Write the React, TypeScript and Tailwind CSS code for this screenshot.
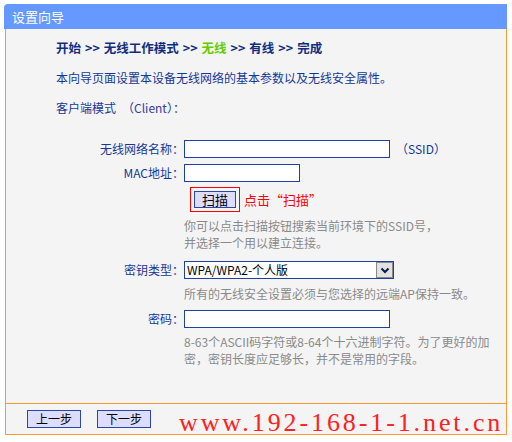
import React from "react";

const cjk = { fontFamily: '"Noto Sans CJK SC", "Noto Sans", sans-serif' };

function Label({ children }: { children: React.ReactNode }) {
  return <div className="w-[128px] text-right text-[12px] leading-[18px] text-[#15389a]">{children}</div>;
}

function Hint({ children }: { children: React.ReactNode }) {
  return <div className="ml-[128px] text-[12px] leading-[17px] text-[#8a8a8a]">{children}</div>;
}

export default function App() {
  return (
    <div className="relative w-[512px] h-[442px] bg-white overflow-hidden" style={cjk}>
      {/* title bar */}
      <div className="mt-[4px] ml-[4px] w-[503px] h-[25px] bg-[#6699ff] rounded-tl-[4px] flex items-center pl-[8px] text-[13px] text-white">
        设置向导
      </div>

      <div className="ml-[5px] w-[502px] bg-[#f4f4f4] border-x border-b border-[#ff9933]">
        <div className="h-[374px] pl-[50px] pt-[9px]">
          {/* steps */}
          <div className="h-[20px] leading-[20px] text-[12.5px] font-bold text-[#112f80] flex gap-[4px]">
            <span>开始</span>
            <span>&gt;&gt;</span>
            <span>无线工作模式</span>
            <span>&gt;&gt;</span>
            <span className="text-[#66cc00]">无线</span>
            <span>&gt;&gt;</span>
            <span>有线</span>
            <span>&gt;&gt;</span>
            <span>完成</span>
          </div>
          <div className="mt-[10px] h-[20px] leading-[20px] text-[12px] text-[#15389a]">
            本向导页面设置本设备无线网络的基本参数以及无线安全属性。
          </div>
          <div className="mt-[10px] h-[20px] leading-[20px] text-[12px] text-[#15389a]">
            客户端模式　（<span className="text-[#3a3aa8]">Client</span>）：
          </div>

          {/* form */}
          <div className="mt-[22px] flex items-center">
            <Label>无线网络名称：</Label>
            <div className="w-[206px] h-[18px] bg-white border border-[#1e3fa5]" />
            <span className="ml-[6px] text-[12px] text-[#15389a]">（SSID）</span>
          </div>
          <div className="mt-[6px] flex items-center">
            <Label>MAC地址：</Label>
            <div className="w-[116px] h-[18px] bg-white border border-[#1e3fa5]" />
          </div>
          <div className="mt-[5px] flex items-center">
            <div className="w-[128px]" />
            <div className="ml-[6px] p-[3px] border border-[#ff0000]">
              <div className="w-[42px] h-[17px] bg-[#ddddff] border border-[#2a46a8] flex items-center justify-center text-[13px] leading-none text-black">
                扫描
              </div>
            </div>
            <span className="ml-[4px] text-[13px] text-[#ff0000]">点击“扫描”</span>
          </div>
          <div className="mt-[5px]">
            <Hint>
              你可以点击扫描按钮搜索当前环境下的SSID号，
              <br />
              并选择一个用以建立连接。
            </Hint>
          </div>
          <div className="mt-[10px] flex items-center">
            <Label>密钥类型：</Label>
            <div className="w-[210px] h-[18px] bg-white border border-[#1e3fa5] flex items-center justify-between">
              <span className="pl-[2px] text-[12px] text-black leading-none">WPA/WPA2-个人版</span>
              <div className="w-[17px] h-[16px] bg-[#e2e2e2] border border-[#888] flex items-center justify-center">
                <svg width="10" height="7" viewBox="0 0 10 7">
                  <path d="M1.5 1.5 L5 5 L8.5 1.5" fill="none" stroke="#0a1a4a" strokeWidth="2" />
                </svg>
              </div>
            </div>
          </div>
          <div className="mt-[6px]">
            <Hint>所有的无线安全设置必须与您选择的远端AP保持一致。</Hint>
          </div>
          <div className="mt-[8px] flex items-center">
            <Label>密码：</Label>
            <div className="w-[206px] h-[18px] bg-white border border-[#1e3fa5]" />
          </div>
          <div className="mt-[5px]">
            <Hint>
              8-63个ASCII码字符或8-64个十六进制字符。为了更好的加
              <br />
              密，密钥长度应足够长，并不是常用的字段。
            </Hint>
          </div>
        </div>

        {/* footer */}
        <div className="h-[31px] border-t border-[#ff9933] flex items-start pt-[6px] pl-[21px] gap-[16px]">
          <button className="w-[54px] h-[18px] bg-[#ddddff] border border-[#2a46a8] text-[12px] leading-none text-black">
            上一步
          </button>
          <button className="w-[54px] h-[18px] bg-[#ddddff] border border-[#2a46a8] text-[12px] leading-none text-black">
            下一步
          </button>
        </div>
      </div>

      {/* watermark */}
      <div
        className="absolute left-[179px] top-[408px] text-[26px] leading-[30px] tracking-[2.9px] text-[#ff2020] whitespace-nowrap"
        style={{ fontFamily: '"Liberation Serif", serif' }}
      >
        www.192-168-1-1.net.cn
      </div>
    </div>
  );
}
